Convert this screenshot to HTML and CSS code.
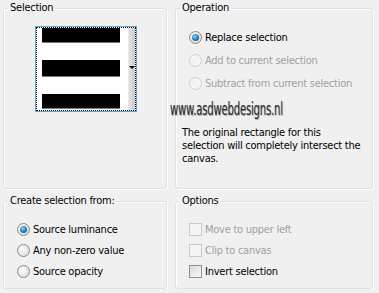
FILE: index.html
```html
<!DOCTYPE html>
<html lang="en">
<head>
  <meta charset="UTF-8">
  <title>Selection from mask</title>
  <link rel="stylesheet" href="styles.css">
</head>
<body>

<div class="dialog">

  <fieldset class="group">
    <legend>Selection</legend>
    <div class="preview">
      <div class="preview-canvas">
        <div class="bar"></div>
        <div class="bar"></div>
        <div class="bar"></div>
      </div>
      <div class="preview-drop">
        <span class="arrow"></span>
      </div>
    </div>
  </fieldset>

  <fieldset class="group">
    <legend>Operation</legend>
    <div class="options wide">
      <label class="opt"><span class="radio checked"></span>Replace selection</label>
      <label class="opt disabled"><span class="radio"></span>Add to current selection</label>
      <label class="opt disabled"><span class="radio"></span>Subtract from current selection</label>
    </div>
    <div class="watermark">www.asdwebdesigns.nl</div>
    <p class="note">The original rectangle for this<br>selection will completely intersect the canvas.</p>
  </fieldset>

  <fieldset class="group">
    <legend>Create selection from:</legend>
    <div class="options">
      <label class="opt"><span class="radio checked"></span>Source luminance</label>
      <label class="opt"><span class="radio"></span>Any non-zero value</label>
      <label class="opt"><span class="radio"></span>Source opacity</label>
    </div>
  </fieldset>

  <fieldset class="group">
    <legend>Options</legend>
    <div class="options">
      <label class="opt disabled"><span class="check"></span>Move to upper left</label>
      <label class="opt disabled"><span class="check"></span>Clip to canvas</label>
      <label class="opt"><span class="check"></span>Invert selection</label>
    </div>
  </fieldset>

</div>

</body>
</html>
```

FILE: styles.css
```css
body {
  margin: 0;
  background-color: #f0f0f0;
  font-family: Tahoma, "DejaVu Sans Condensed", "Liberation Sans", sans-serif;
  font-size: 11px;
  letter-spacing: -0.25px;
  color: #000;
}

.dialog {
  display: grid;
  grid-template-columns: 164px 198px;
  grid-template-rows: 188px 95px;
  column-gap: 8px;
  row-gap: 5px;
  padding: 1px 0 0 3px;
}

.group {
  margin: 0;
  padding: 0 0 0 12px;
  border: 1px solid #dbe3e8;
  border-radius: 3px;
  box-shadow: 1px 1px 0 #fff, inset 1px 1px 0 #fff;
  min-width: 0;
}

.group legend {
  padding: 0 2px;
  margin-left: -8px;
  line-height: 14px;
}

/* selection preview */
.preview {
  display: flex;
  width: 100px;
  height: 84px;
  margin: 12px 0 0 20px;
  border: 1px dotted #000;
  outline: 1px solid #5aa7d6;
  box-sizing: border-box;
  background: #fff;
}

.preview-canvas {
  flex: 1;
  display: flex;
  flex-direction: column;
  justify-content: space-between;
  padding: 0 8px 1px 5px;
}

.bar {
  height: 14px;
  background: #000;
  border-bottom: 1px solid #777;
}

.bar:nth-child(2) {
  height: 16px;
}

.preview-drop {
  width: 7px;
  background: linear-gradient(to right, #e8e8e8, #c8c8c8);
  position: relative;
}

.arrow {
  position: absolute;
  left: 1px;
  top: 38px;
  border-left: 3px solid transparent;
  border-right: 3px solid transparent;
  border-top: 3px solid #000;
}

/* radio / check rows */
.options {
  display: flex;
  flex-direction: column;
  gap: 8px;
  margin-top: 15px;
  padding-left: 1px;
}

.options.wide {
  gap: 10px;
  margin-top: 16px;
}

.opt {
  display: flex;
  align-items: center;
  gap: 3px;
  height: 13px;
}

.opt.disabled {
  color: #a0a0a0;
}

.radio {
  width: 11px;
  height: 11px;
  border-radius: 50%;
  border: 1px solid #8a8a8a;
  background: radial-gradient(circle at 40% 40%, #fff 0, #e6e6e6 55%, #cfcfcf 100%);
  position: relative;
  flex: none;
}

.disabled .radio {
  border-color: #d0d0d0;
  background: #f4f4f4;
}

.radio.checked::after {
  content: "";
  position: absolute;
  left: 2px;
  top: 2px;
  width: 7px;
  height: 7px;
  border-radius: 50%;
  background: radial-gradient(circle at 40% 35%, #8fd0f5 0, #1c72b6 60%, #0e4f86 100%);
}

.check {
  width: 11px;
  height: 11px;
  border: 1px solid #8e8f8f;
  background: linear-gradient(135deg, #dcdcdc, #f8f8f8);
  flex: none;
}

.disabled .check {
  border-color: #c8c8c8;
  background: #f4f4f4;
}

.watermark {
  margin: 11px 0 0 -18px;
  font-family: "Liberation Sans Narrow", "DejaVu Sans Condensed", sans-serif;
  font-size: 17px;
  letter-spacing: -0.3px;
  color: #262626;
  text-shadow: 1px 1px 1px #a8a8a8;
  line-height: 17px;
  transform: scaleX(0.66);
  transform-origin: left center;
  white-space: nowrap;
}

.note {
  margin: 8px 4px 0 -6px;
  line-height: 13px;
}
```
